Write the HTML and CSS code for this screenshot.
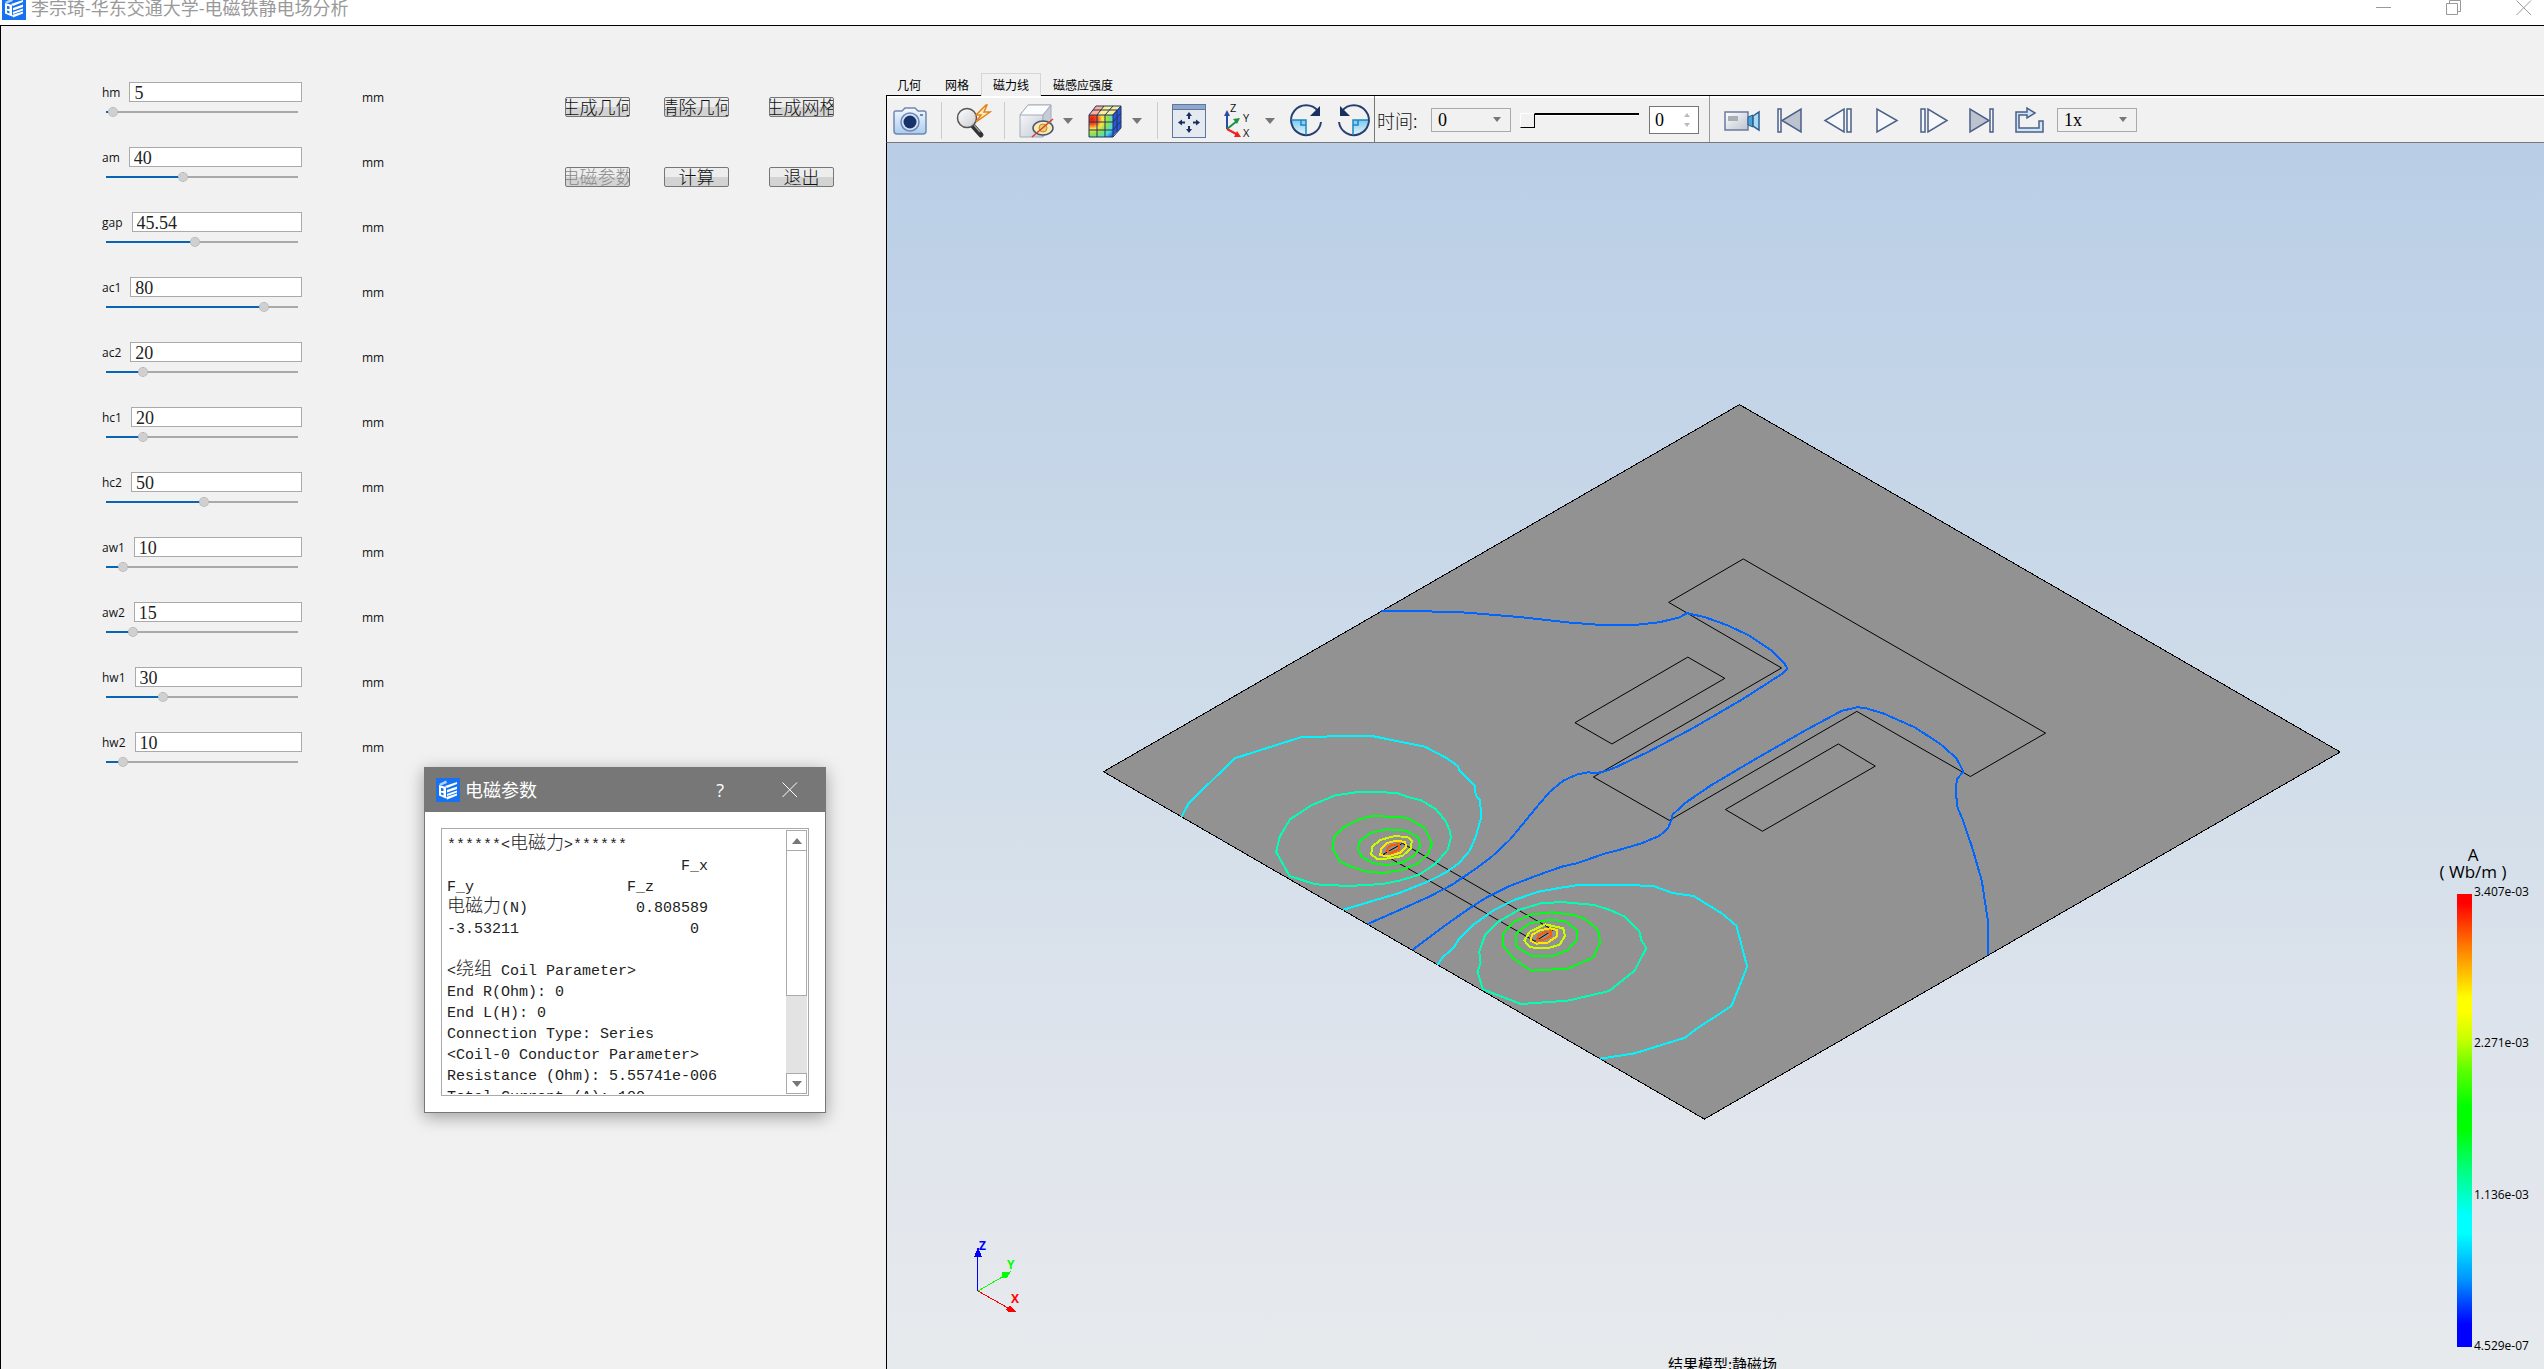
FILE: index.html
```html
<!DOCTYPE html>
<html lang="zh-CN">
<head>
<meta charset="utf-8">
<title>李宗琦-华东交通大学-电磁铁静电场分析</title>
<link rel="stylesheet" href="styles.css">
</head>
<body>
<svg width="0" height="0" class="defs" aria-hidden="true">
  <defs>
    <linearGradient id="gLens" x1="0" y1="0" x2="1" y2="1"><stop offset="0" stop-color="#fff"/><stop offset="1" stop-color="#c9ccd2"/></linearGradient>
    <linearGradient id="gBlue" x1="0" y1="0" x2="0" y2="1"><stop offset="0" stop-color="#f4f9ff"/><stop offset="1" stop-color="#a9cdef"/></linearGradient>
    <linearGradient id="gGrey" x1="0" y1="0" x2="1" y2="1"><stop offset="0" stop-color="#fff"/><stop offset="1" stop-color="#bcc3ce"/></linearGradient>
    <linearGradient id="gSky" x1="0" y1="0" x2="0" y2="1"><stop offset="0" stop-color="#7cc8ee"/><stop offset="1" stop-color="#e4f6fd"/></linearGradient>
    <radialGradient id="gHeat" cx="0.12" cy="0.2" r="1.15"><stop offset="0" stop-color="#e3170a"/><stop offset=".2" stop-color="#f5501c"/><stop offset=".38" stop-color="#ffe14a"/><stop offset=".58" stop-color="#8be34a"/><stop offset=".8" stop-color="#43d9e8"/><stop offset="1" stop-color="#1c50e0"/></radialGradient>
    <symbol id="logo" viewBox="0 0 24 24">
      <rect width="24" height="24" fill="#1672ee"/>
      <path d="M3 6 10 2.500 11 5 5 7.500Z" fill="#b9d3f8"/>
      <path d="M3 7 10 9V20.500L3 17.500Z" fill="#fff"/>
      <path d="M5 9.800 7.500 10.500V13H5zM5 14.500 7.500 15.200V17.500L5 16.500z" fill="#1672ee"/>
      <path d="M9 8 21 4V6L11 10ZM11 12 21 8.500V11L11 14.500ZM11 16 21 12.500V14.500L11 18ZM10 19 21 15.500V17.500L11 21.500Z" fill="#fff"/>
    </symbol>
  </defs>
</svg>

<header class="titlebar">
  <svg class="logo"><use href="#logo"/></svg>
  <h1>李宗琦-华东交通大学-电磁铁静电场分析</h1>
  <div class="window-buttons">
    <button aria-label="最小化"><svg viewBox="0 0 16 16"><path d="M0 7.500H15"/></svg></button>
    <button aria-label="还原"><svg viewBox="0 0 16 16"><path d="M.5 3.500H11.500V14.500H.5ZM3.500 3V.5H14.500V11.500H12"/></svg></button>
    <button aria-label="关闭"><svg viewBox="0 0 16 16"><path d="M.5 .5 15 15M15 .5 .5 15"/></svg></button>
  </div>
</header>

<main class="workspace">
  <section class="panel">
    <div class="params">
      <div class="param"><label for="hm">hm</label><input id="hm" type="text" value="5"><span class="unit">mm</span><input type="range" aria-label="hm" step="0.1" value="1.1" style="--fill:1.1%"></div>
      <div class="param"><label for="am">am</label><input id="am" type="text" value="40"><span class="unit">mm</span><input type="range" aria-label="am" step="0.1" value="39.6" style="--fill:39.6%"></div>
      <div class="param"><label for="gap">gap</label><input id="gap" type="text" value="45.54"><span class="unit">mm</span><input type="range" aria-label="gap" step="0.1" value="46.2" style="--fill:46.2%"></div>
      <div class="param"><label for="ac1">ac1</label><input id="ac1" type="text" value="80"><span class="unit">mm</span><input type="range" aria-label="ac1" step="0.1" value="84" style="--fill:84%"></div>
      <div class="param"><label for="ac2">ac2</label><input id="ac2" type="text" value="20"><span class="unit">mm</span><input type="range" aria-label="ac2" step="0.1" value="17.6" style="--fill:17.6%"></div>
      <div class="param"><label for="hc1">hc1</label><input id="hc1" type="text" value="20"><span class="unit">mm</span><input type="range" aria-label="hc1" step="0.1" value="17.6" style="--fill:17.6%"></div>
      <div class="param"><label for="hc2">hc2</label><input id="hc2" type="text" value="50"><span class="unit">mm</span><input type="range" aria-label="hc2" step="0.1" value="51" style="--fill:51%"></div>
      <div class="param"><label for="aw1">aw1</label><input id="aw1" type="text" value="10"><span class="unit">mm</span><input type="range" aria-label="aw1" step="0.1" value="6.6" style="--fill:6.6%"></div>
      <div class="param"><label for="aw2">aw2</label><input id="aw2" type="text" value="15"><span class="unit">mm</span><input type="range" aria-label="aw2" step="0.1" value="12" style="--fill:12%"></div>
      <div class="param"><label for="hw1">hw1</label><input id="hw1" type="text" value="30"><span class="unit">mm</span><input type="range" aria-label="hw1" step="0.1" value="28.6" style="--fill:28.6%"></div>
      <div class="param"><label for="hw2">hw2</label><input id="hw2" type="text" value="10"><span class="unit">mm</span><input type="range" aria-label="hw2" step="0.1" value="6.6" style="--fill:6.6%"></div>
    </div>
    <div class="actions">
      <button><span>生成几何</span></button><button><span>清除几何</span></button><button><span>生成网格</span></button>
      <button disabled><span>电磁参数</span></button><button><span>计算</span></button><button><span>退出</span></button>
    </div>
  </section>

  <section class="viewer">
    <nav class="tabs">
      <button>几何</button><button>网格</button><button class="active">磁力线</button><button>磁感应强度</button>
    </nav>
    <div class="toolbar">
      <div class="group view-tools">
        <button aria-label="截图"><svg viewBox="0 0 34 34"><path d="M2 7H9L12 4H22L25 7H31Q33 7 33 9V27Q33 30 30 30H4Q1 30 1 27V9Q1 7 2 7Z" fill="url(#gBlue)" stroke="#7088b0" stroke-width="1.500"/><circle cx="17" cy="18" r="9" fill="#d5e4f6" stroke="#6f87b3" stroke-width="1.500"/><circle cx="17" cy="18" r="6.500" fill="#17336a"/><rect x="27" y="10" width="3" height="2" fill="#7088b0"/></svg></button>
        <i class="sep"></i>
        <button aria-label="探测"><svg viewBox="0 0 34 34"><path d="M17 22 25 31" stroke="#333" stroke-width="5" stroke-linecap="round"/><path d="M18 21 24 28" stroke="#999" stroke-width="1.500"/><circle cx="11" cy="14" r="9.500" fill="url(#gLens)" stroke="#555" stroke-width="1.500"/><path d="M30 1 20 11H25L20 18 34 8H28L31 1Z" fill="#fff0b8" stroke="#e5811c" stroke-width="1.500"/></svg></button>
        <i class="sep"></i>
        <button aria-label="隐藏"><svg viewBox="0 0 34 34"><path d="M1 11 9 1H32L24 11V33H1Z" fill="url(#gGrey)" stroke="#a4acba"/><path d="M1 11 9 1H32L24 11Z" fill="#fbfcfd" stroke="#a4acba"/><path d="M24 11 32 1V24L24 33Z" fill="#c6cbd5" stroke="#a4acba"/><ellipse cx="24" cy="24" rx="10" ry="7" fill="#fdeaae" stroke="#44577c" stroke-width="1.500"/><circle cx="24" cy="24" r="4" fill="#f0c870" stroke="#b98d3e"/><path d="M13 33 34 15" stroke="#cf4327" stroke-width="1.500"/></svg></button>
        <i class="arrow"></i>
        <button aria-label="云图"><svg viewBox="0 0 34 34"><path d="M1 11 8 2H33L25 11Z" fill="#f6ef9c"/><path d="M1 11 8 2H16L9 11Z" fill="#ffb09a"/><path d="M24 11 33 2V24L24 33Z" fill="#2957d8"/><path d="M1 11H25V33H1Z" fill="url(#gHeat)"/><path d="M1 11H25V33H1ZM9 11V33M17 11V33M1 18H25M1 26H25M1 11 8 2H33L25 11M9 11 16 2M17 11 25 2M5 6H29V28M33 2V24L25 33M25 18 33 9M25 26 33 17" fill="none" stroke="#273454"/></svg></button>
        <i class="arrow"></i>
        <i class="sep tight"></i>
        <button aria-label="适应窗口"><svg viewBox="0 0 34 34"><rect x=".5" y=".5" width="33" height="33" fill="#e5e9f0" stroke="#60769c"/><rect x="1" y="1" width="32" height="4" fill="#8ea8cc"/><path d="M0 5.500H34" stroke="#60769c"/><path d="M17 8 20 12H14ZM17 29 20 25H14ZM6 18.500 10 15.500V21.500ZM28 18.500 24 15.500V21.500Z" fill="#18305f"/><path d="M17 11V15M17 22V26M9 18.500H13M21 18.500H25" stroke="#18305f" stroke-width="2"/></svg></button>
        <button aria-label="坐标视角" class="spaced"><svg viewBox="0 0 34 34"><path d="M6 25V9" stroke="#2b4aa5" stroke-width="2"/><path d="M3 12 6 6 9 12Z" fill="#2b4aa5"/><path d="M6 25 16 17" stroke="#179444" stroke-width="2"/><path d="M12 15 19 14 16 20Z" fill="#179444"/><path d="M6 25 17 31" stroke="#e22" stroke-width="2"/><path d="M16 27 20 33 13 33Z" fill="#e22"/><text x="9" y="8">Z</text><text x="22" y="18">Y</text><text x="22" y="33">X</text></svg></button>
        <i class="arrow"></i>
        <button aria-label="顺时针旋转"><svg viewBox="0 0 34 34"><path d="M0 16H16V31A15 15 0 0 1 1 16Z" fill="url(#gSky)"/><path d="M28 7A15 15 0 1 0 31 18" fill="none" stroke="#28406f" stroke-width="2"/><path d="M30 2V12H20Z" fill="#18305f"/><path d="M1 16H16V31M11 16V21H16" fill="none" stroke="#1b86c4" stroke-width="1.500"/></svg></button>
        <button aria-label="逆时针旋转" class="spaced"><svg viewBox="0 0 34 34"><path d="M30 16H14V31A15 15 0 0 0 29 16Z" fill="url(#gSky)"/><path d="M3 7A15 15 0 1 1 0 18" fill="none" stroke="#28406f" stroke-width="2"/><path d="M1 2V12H11Z" fill="#18305f"/><path d="M29 16H14V31M19 16V21H14" fill="none" stroke="#1b86c4" stroke-width="1.500"/></svg></button>
      </div>
      <div class="group time-tools">
        <label for="time">时间:</label>
        <span class="combo"><select id="time"><option>0</option></select></span>
        <input type="range" class="time-slider" aria-label="时间步" value="0">
        <span class="spin"><input type="text" aria-label="时间步序号" value="0"><i class="up"></i><i class="down"></i></span>
      </div>
      <div class="group play-tools">
        <button aria-label="录制"><svg viewBox="0 0 34 34"><rect x="0" y="9" width="23" height="18" fill="url(#gGrey)" stroke="#6b7b9c" stroke-width="1.500"/><rect x="3" y="13" width="10" height="5" fill="#a9adb4"/><path d="M23 14 28 12V24L23 22Z" fill="#4ba3d4" stroke="#2b5d8e"/><path d="M28 13 34 9V27L28 23Z" fill="#a7daf2" stroke="#2b5d8e" stroke-width="1.500"/></svg></button>
        <button aria-label="开头"><svg viewBox="0 0 34 34" class="line"><path d="M5 6H8V29H5Z"/><path d="M28 6V29L9 17.500Z" fill="#bcc3ce"/></svg></button>
        <button aria-label="上一步"><svg viewBox="0 0 34 34" class="line"><path d="M23 6V29L4 17.500Z"/><path d="M26 6H30V29H26Z"/></svg></button>
        <button aria-label="播放"><svg viewBox="0 0 34 34" class="line"><path d="M8 6V29L28 17.500Z"/></svg></button>
        <button aria-label="下一步"><svg viewBox="0 0 34 34" class="line"><path d="M4 6H8V29H4Z"/><path d="M11 6V29L30 17.500Z"/></svg></button>
        <button aria-label="结尾"><svg viewBox="0 0 34 34" class="line"><path d="M5 6V29L24 17.500Z" fill="#bcc3ce"/><path d="M25 6H28V29H25Z"/></svg></button>
        <button aria-label="循环"><svg viewBox="0 0 34 34" class="line"><path d="M3 9H14V5L22 10 14 15V12H6V25H26V18H30V29H3Z" fill="#cfe4f7"/></svg></button>
        <span class="combo speed"><select aria-label="速度"><option>1x</option></select></span>
      </div>
    </div>

    <div class="canvas">
      <svg class="scene" viewBox="887 143 1657 1226">
        <!-- solution domain -->
        <path d="M1739.500 404.600 2340.200 752 1704.400 1119.100 1103.500 771.700Z" class="domain"/>
        <!-- iron core and coils -->
        <g transform="translate(1360 390) scale(.63776 .47194)" class="edges">
          <path d="M601 358 1075 727 957 819 779 681 485 912 366 820 661 589 484 450Z"/>
          <path d="M514 566 572 611 395 750 337 705Z"/>
          <path d="M750 750 808 797 631 935 573 889Z"/>
        </g>
        <g transform="translate(1360 390) scale(.63776 .47194)" class="flux">
          <path d="M33 468 150 470 250 481 330 493 380 498 430 498 470 492 500 482 513 473 540 481 575 498 610 520 645 552 665 578 670 590 661 602 600 655 520 718 450 768 400 800 384 808 374 811"/>
          <path d="M984 1197V1120L975 1040 960 970 945 910 937 885 934 850 936 825 946 808 935 780 910 750 870 715 820 685 795 675 780 672 755 680 700 720 620 782 550 838 510 875 490 900 488 915"/>
        </g>
        <!-- armature plate and field lines around it -->
        <g transform="translate(1090 720) scale(.44643 .33333)">
          <path class="edges" d="M700 370 1037 630 997 664 657 403Z"/>
          <g class="flux">
            <path d="M1140 160 1115 157 1090 164 1060 182 1030 215 1000 262 980 295 940 360 900 410 860 450 810 495 760 530 690 572 622 612"/>
            <path d="M1301 303 1295 325 1275 348 1235 370 1190 388 1155 400 1090 430 1057 440 1000 467 940 498 885 535 850 565 800 612 722 690"/>
          </g>
          <g class="flux cyan">
            <path d="M205 290 221 250 324 115 474 51 628 47 750 80 800 115 824 138 828 153 862 198 864 225 874 242 876 293 864 350 850 393 826 430 800 455 760 483 695 518 630 544 566 570"/>
            <path d="M779 735 788 715 815 682 826 658 860 613 905 570 950 540 1005 515 1060 502 1100 494 1200 494 1264 499 1305 519 1352 528 1415 580 1448 617 1472 740 1437 858 1360 925 1333 953 1220 1000 1143 1016"/>
          </g>
          <g class="flux teal">
            <path d="M686 218 710 230 742 241 775 268 796 302 807 335 808 355 802 388 775 430 738 464 690 483 655 492 580 498 505 493 447 468 417 396 425 350 448 298 497 255 550 226 600 216Z"/>
            <path d="M1057 546 1130 555 1165 570 1198 590 1230 632 1235 660 1246 684 1220 752 1163 813 1070 842 965 852 880 808 868 755 875 728 872 695 885 645 915 605 960 570 1010 550Z"/>
          </g>
          <g class="flux green">
            <path d="M628 289 690 290 715 296 750 325 766 370 758 400 735 430 700 449 657 459 620 455 585 440 560 425 543 385 547 350 567 323 600 300Z"/>
            <path d="M665 328 708 332 735 352 740 378 728 405 700 428 665 435 635 430 608 410 600 385 605 362 630 338Z"/>
            <path d="M1035 577 1085 585 1110 598 1138 630 1143 665 1128 712 1070 746 988 752 948 715 924 675 926 640 950 605 990 583Z"/>
            <path d="M1030 599 1065 604 1090 630 1090 660 1070 690 1035 709 990 708 955 680 955 640 985 610Z"/>
          </g>
          <g class="flux lime">
            <path d="M680 349 710 350 721 362 718 385 700 408 670 415 645 418 630 403 632 380 650 360Z"/>
            <path d="M1020 613 1060 625 1064 648 1052 674 1025 685 985 682 973 662 985 635Z"/>
          </g>
          <g class="flux yellow">
            <path d="M685 362 706 366 708 380 695 398 670 408 650 406 652 388 664 370Z"/>
            <path d="M1030 625 1047 630 1045 650 1025 668 1000 671 987 662 990 645 1005 632Z"/>
          </g>
          <g class="flux orange">
            <path d="M678 374 692 373 692 388 675 399 664 393 668 382Z"/>
            <path d="M1020 636 1033 634 1032 648 1015 660 1002 660 1003 648Z"/>
          </g>
        </g>
        <!-- axis triad -->
        <g class="triad">
          <path d="M977.500 1291V1255" stroke="#00f"/><path d="M978 1247 982 1257H974Z" fill="#00f"/>
          <path d="M978 1291 1004 1276" stroke="#0f0"/><path d="M1010 1272 1002 1273 1002 1277 1006 1278Z" fill="#0f0" stroke="#0f0"/>
          <path d="M978 1291 1008 1308" stroke="#f00"/><path d="M1016 1312 1010 1305 1006 1309 1008 1312Z" fill="#f00"/>
          <text x="979" y="1250" fill="#00f">Z</text><text x="1007" y="1269" fill="#0f0">Y</text><text x="1011" y="1303" fill="#f00">X</text>
        </g>
      </svg>
      <div class="legend">
        <div class="legend-title">A<br>( Wb/m )</div>
        <div class="scale">
          <div class="bar"></div>
          <div class="ticks"><span>3.407e-03</span><span>2.271e-03</span><span>1.136e-03</span><span>4.529e-07</span></div>
        </div>
      </div>
      <div class="caption">结果模型:静磁场</div>
    </div>
  </section>
</main>

<section class="dialog" role="dialog" aria-label="电磁参数">
  <header>
    <svg class="logo"><use href="#logo"/></svg>
    <h2>电磁参数</h2>
    <button aria-label="帮助">?</button>
    <button aria-label="关闭"><svg viewBox="0 0 16 16"><path d="M.5 .5 15 15M15 .5 .5 15"/></svg></button>
  </header>
  <div class="report">
<pre>******&lt;<b>电磁力</b>&gt;******
                          F_x
F_y                 F_z
<b>电磁力</b>(N)            0.808589
-3.53211                   0

&lt;<b>绕组</b> Coil Parameter&gt;
End R(Ohm): 0
End L(H): 0
Connection Type: Series
&lt;Coil-0 Conductor Parameter&gt;
Resistance (Ohm): 5.55741e-006
Total Current (A): 100</pre>
    <div class="scrollbar">
      <button aria-label="向上"><i class="up"></i></button>
      <div class="thumb"></div>
      <button aria-label="向下"><i class="down"></i></button>
    </div>
  </div>
</section>
</body>
</html>
```
FILE: styles.css
```css
* { box-sizing: border-box; }

body {
  margin: 0;
  height: 100vh;
  overflow: hidden;
  position: relative;
  display: flex;
  flex-direction: column;
  background: #f1f1f1;
  color: #111;
  font-family: "Open Sans", "Noto Sans CJK SC", sans-serif;
  font-size: 12px;
}

h1, h2 { margin: 0; font-weight: 400; font-size: 18px; line-height: 24px; white-space: nowrap; }
button { margin: 0; padding: 0; border: 0; background: none; color: inherit; font: inherit; }
.defs { position: absolute; }
.logo { width: 24px; height: 24px; flex: none; }

/* title bar */
.titlebar {
  height: 25px;
  flex: none;
  display: flex;
  align-items: center;
  gap: 5px;
  padding: 0 12px 9px 2px;
  overflow: hidden;
  background: #fff;
  color: #999;
}
.window-buttons { display: flex; gap: 54px; margin-left: auto; }
.window-buttons svg, .dialog header button svg { width: 16px; height: 16px; display: block; fill: none; stroke: currentColor; }

.workspace {
  flex: 1;
  min-height: 0;
  display: grid;
  grid-template-columns: 885px 1fr;
  border-top: 1px solid #000;
  border-left: 1px solid #000;
}

/* parameter panel */
.panel { display: flex; align-items: flex-start; padding: 56px 0 0 101px; }
.params { width: 282px; }
.param {
  height: 65px;
  display: grid;
  grid-template-columns: auto 1fr 82px;
  grid-template-rows: 20px 20px;
}
.param label { padding-right: 9px; line-height: 22px; }
.param input[type="text"] {
  width: 100%;
  min-width: 0;
  height: 20px;
  padding: 2px 0 0 4px;
  border: 1px solid #aaa;
  background: #fff;
  color: #222;
  font: 18px/18px "Liberation Serif", serif;
}
.unit { padding: 8px 0 0 60px; line-height: 16px; }
.param input[type="range"] {
  grid-column: 1 / 3;
  grid-row: 2;
  appearance: none;
  height: 10px;
  margin: 5px 4px 0;
  background: linear-gradient(90deg, #0a64b4 var(--fill), #a9a9a9 var(--fill)) 0 4px / 100% 2px no-repeat;
}
.param input[type="range"]::-webkit-slider-thumb {
  appearance: none;
  width: 10px;
  height: 10px;
  border: 1px dotted #aaa;
  border-radius: 50%;
  background: #d0d0d0;
}

.actions {
  display: grid;
  grid-template-columns: 99px 105px 65px;
  row-gap: 50px;
  margin: 15px 0 0 181px;
}
.actions button {
  width: 65px;
  height: 20px;
  display: flex;
  justify-content: center;
  overflow: hidden;
  border: 1px solid #777;
  border-radius: 2px;
  background: linear-gradient(#ededed 50%, #d3d3d3 50%);
  font: 300 18px/16px "Noto Sans CJK SC", sans-serif;
}
.actions button span { flex: none; }
.actions button:disabled { color: #888; }

/* viewer */
.viewer { display: flex; flex-direction: column; min-width: 0; }
.tabs { display: flex; align-items: flex-end; height: 70px; border-bottom: 1px solid #000; }
.tabs button {
  height: 22px;
  padding: 0 11px;
  border: 1px solid transparent;
  border-bottom: 0;
  color: #000;
  font: 12px/22px "Noto Sans CJK SC", sans-serif;
}
.tabs button:first-child { margin-left: -1px; }
.tabs .active { height: 23px; margin-bottom: -1px; border-color: #d5d5d5; background: #f1f1f1; }

.toolbar {
  display: flex;
  height: 47px;
  flex: none;
  border-left: 1px solid #000;
  border-bottom: 1px solid #777;
  box-shadow: inset 0 2px #fff;
}
.group { display: flex; align-items: center; }
.group button, .group button svg { width: 34px; height: 34px; display: block; flex: none; overflow: visible; }
.group button text { font: 11px "Open Sans", sans-serif; fill: #111; }
.view-tools { padding: 3px 1px 0 6px; }
.sep { width: 1px; height: 37px; margin: 0 14px; background: #ccc; }
.sep.tight { margin-left: 0; }
.spaced { margin-left: 15px; }
.arrow, .down { border: 5px solid transparent; border-top: 6px solid #777; border-bottom: 0; }
.up { border: 5px solid transparent; border-bottom: 6px solid #777; border-top: 0; }
.arrow { margin: 0 15px 0 10px; }
.time-tools { width: 336px; padding-top: 2px; border-left: 1px solid #777; border-right: 1px solid #999; }
.time-tools label { width: 56px; padding-left: 2px; font: 300 18px/24px "Noto Sans CJK SC", sans-serif; white-space: nowrap; }
.combo { position: relative; width: 80px; height: 24px; }
.combo::after {
  content: "";
  position: absolute;
  right: 10px;
  top: 9px;
  border: 4px solid transparent;
  border-top: 5px solid #777;
  border-bottom: 0;
}
.combo select {
  appearance: none;
  display: block;
  width: 100%;
  height: 24px;
  padding: 0 6px;
  border: 1px solid #aaa;
  border-radius: 0;
  background: #f1f1f1;
  color: #000;
  font: 18px/20px "Liberation Serif", serif;
}
.time-slider {
  appearance: none;
  width: 119px;
  height: 15px;
  margin: 0 10px 0 9px;
  background: linear-gradient(#000 2px, #fff 2px) 100% 0 / 104px 3px no-repeat;
}
.time-slider::-webkit-slider-thumb {
  appearance: none;
  width: 15px;
  height: 15px;
  border: 1px solid #fff;
  border-right-color: #000;
  border-bottom-color: #000;
  background: #f1f1f1;
}
.spin { position: relative; width: 50px; height: 28px; }
.spin input {
  width: 100%;
  height: 28px;
  padding: 0 5px;
  border: 1px solid #777;
  background: #fff;
  font: 18px/20px "Liberation Serif", serif;
}
.spin i { position: absolute; right: 9px; border-width: 4px 3px; }
.spin .up { top: 7px; border-top: 0; border-bottom-color: #bbb; }
.spin .down { bottom: 7px; border-bottom: 0; border-top-color: #bbb; }
.play-tools { flex: 1; gap: 14px; padding: 2px 0 0 15px; }
.line { fill: #f6f8fb; stroke: #4a6088; stroke-width: 1.5px; }
.speed { margin-left: -4px; }

/* 3D canvas */
.canvas {
  flex: 1;
  min-height: 0;
  position: relative;
  overflow: hidden;
  border-left: 1px solid #000;
  background: linear-gradient(#b9cee6, #d4dfea 56%, #dfe4ec 76%, #e7eaed);
}
.scene { display: block; width: 100%; height: 100%; shape-rendering: crispEdges; }
.domain { fill: #929292; stroke: #000; }
.edges, .flux, .scene .edges path, .flux path { fill: none; vector-effect: non-scaling-stroke; }
.edges { stroke: #000; stroke-width: 1px; }
.flux { stroke: #0064ff; stroke-width: 2px; }
.cyan { stroke: #00f5ff; }
.teal { stroke: #00ffb4; }
.green { stroke: #00ff14; }
.lime { stroke: #c8ff00; }
.yellow { stroke: #ffe600; }
.orange { stroke: #ff5a00; }
.triad text { font: 700 12px "Open Sans", sans-serif; }

.legend { position: absolute; right: 8px; bottom: 17px; width: 79px; color: #000; }
.legend-title {
  width: 80px;
  margin: 0 0 10px -24px;
  text-align: center;
  white-space: nowrap;
  font: 500 17px/17px "Open Sans", sans-serif;
}
.scale { display: flex; gap: 2px; height: 462px; }
.bar {
  width: 15px;
  margin: 4px 0 5px;
  background: linear-gradient(#f00 2%, #ff8000 12%, #ff0 23%, #ff0 26%, #c8ff00 32%, #5aff00 39%, #0f0 47%, #0f0 52%, #00ff80 61%, #0ff 71%, #0ff 75%, #0096ff 85%, #00f 95%);
}
.ticks { display: flex; flex-direction: column; justify-content: space-between; margin: -6px 0 -2px; line-height: 16px; }
.caption {
  position: absolute;
  left: 0;
  right: 0;
  bottom: -6px;
  padding-left: 14px;
  text-align: center;
  color: #000;
  font: 15px/22px "Noto Sans CJK SC", sans-serif;
}

/* result dialog */
.dialog {
  position: absolute;
  left: 424px;
  top: 767px;
  width: 402px;
  border: 1px solid #777;
  background: #fff;
  box-shadow: 0 4px 16px rgba(0, 0, 0, .35);
}
.dialog header {
  display: flex;
  align-items: center;
  height: 44px;
  padding: 0 27px 0 11px;
  background: #777;
  color: #fff;
}
.dialog h2 { flex: 1; padding-left: 5px; }
.dialog header button { font-size: 18px; }
.dialog header button + button { margin-left: 58px; }
.report {
  display: flex;
  height: 268px;
  margin: 16px;
  padding: 1px;
  border: 1px solid #aaa;
  overflow: hidden;
}
.report pre {
  flex: 1;
  min-width: 0;
  margin: 0;
  padding: 5px 0 0 4px;
  overflow: hidden;
  color: #222;
  font: 15px/21px "Liberation Mono", "Noto Sans CJK SC", monospace;
}
.report b { font: 300 18px/1px "Noto Sans CJK SC", sans-serif; }
.scrollbar { width: 21px; display: flex; flex-direction: column; background: #e3e3e3; }
.scrollbar button {
  height: 21px;
  flex: none;
  display: grid;
  place-items: center;
  border: 1px solid #aaa;
  background: #fff;
}
.thumb { height: 145px; margin-bottom: auto; border: 1px solid #aaa; border-top: 0; background: #fff; }
```
